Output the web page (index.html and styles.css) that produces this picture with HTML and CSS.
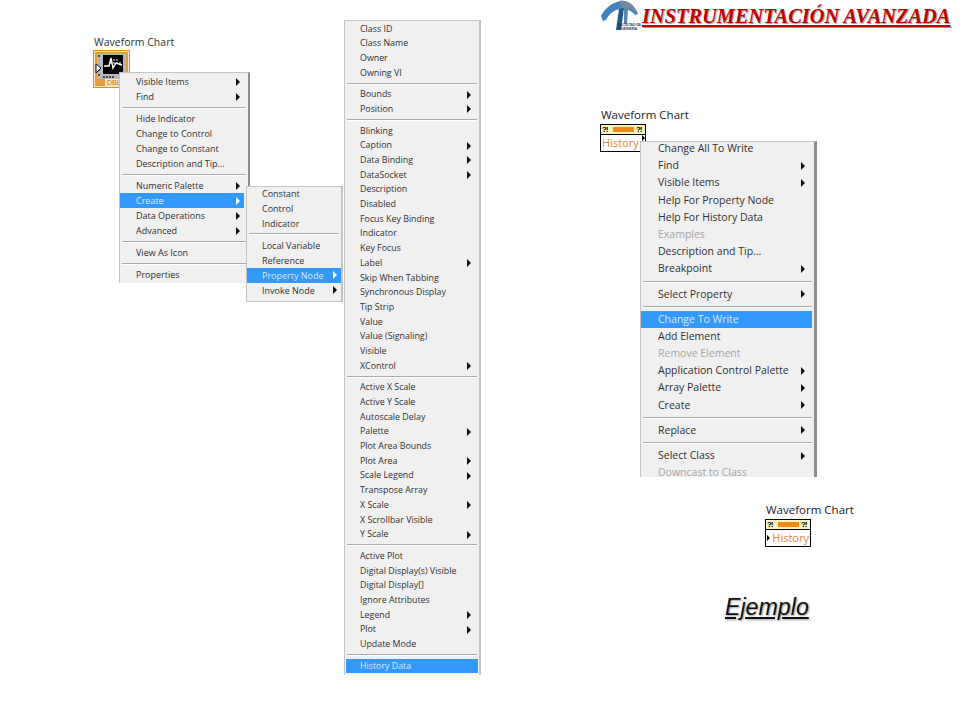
FILE: index.html
```html
<!DOCTYPE html>
<html lang="es">
<head>
    <meta charset="UTF-8">
    <title>Instrumentación Avanzada - Waveform Chart</title>
    <link rel="stylesheet" href="styles.css">
</head>
<body>
<div class="slide">
    <div class="head">
        <div class="logo">
            <svg width="42" height="33" viewBox="0 0 42 33">
                <path d="M1 16 C5 8 12 3 20 1 C28 0 34 5 38 14 L35 15 C31 10 27 9 23 9 C16 9 10 12 6 20 L3 21 Z" fill="#3f82bd"/>
                <path d="M20 1 C28 0 34 5 38 14 C32 9 27 8 21 8 Z" fill="#7388a0"/>
                <path d="M19 9 L24 8 L21 30 L16 30 Z" fill="#1f568c"/>
                <path d="M24 8 L28 9 L27 24 L24 24 Z" fill="#5c87ad"/>
            </svg>
            <span class="logo-txt">FACULTAD DE<br>INGENIERIA</span>
        </div>
        <h1 class="title">INSTRUMENTACIÓN AVANZADA</h1>
    </div>

    <!-- bloque izquierdo -->
    <div class="lbl lbl-a">Waveform Chart</div>
    <div class="chart-icon">
        <svg width="37" height="38" viewBox="0 0 37 38">
            <rect x="0.5" y="0.5" width="36" height="37" fill="#fbe3c4" stroke="#e58a1f"/>
            <rect x="2" y="2" width="33" height="34" fill="#e89a3c"/>
            <rect x="4" y="4" width="29" height="25" fill="#b4b8bf"/>
            <rect x="10" y="5" width="20" height="19" fill="#000"/>
            <path d="M11 16 H16 L18 8 L20 18 L23 13 L29 15" fill="none" stroke="#fff" stroke-width="1.4"/>
            <path d="M17 13 H28 M20 10 H26" stroke="#fff" stroke-width="1" stroke-dasharray="2 1"/>
            <path d="M5 6 H8 M5 20 H8 M5 25 H8 M10 27 H22" stroke="#222" stroke-width="1.4" stroke-dasharray="2 1"/>
            <path d="M3 14 L8 18 L3 23 Z" fill="#fff" stroke="#111"/>
        </svg>
        <span class="dbl">DBL</span>
    </div>

    <div class="menu sm m1">
        <div class="it arr">Visible Items</div>
        <div class="it arr">Find</div>
        <hr>
        <div class="it">Hide Indicator</div>
        <div class="it">Change to Control</div>
        <div class="it">Change to Constant</div>
        <div class="it">Description and Tip...</div>
        <hr>
        <div class="it arr">Numeric Palette</div>
        <div class="it arr sel">Create</div>
        <div class="it arr">Data Operations</div>
        <div class="it arr">Advanced</div>
        <hr>
        <div class="it">View As Icon</div>
        <hr>
        <div class="it">Properties</div>
    </div>

    <div class="menu sm m2">
        <div class="it">Constant</div>
        <div class="it">Control</div>
        <div class="it">Indicator</div>
        <hr>
        <div class="it">Local Variable</div>
        <div class="it">Reference</div>
        <div class="it arr sel">Property Node</div>
        <div class="it arr">Invoke Node</div>
    </div>

    <div class="menu sm m3">
        <div class="it">Class ID</div>
        <div class="it">Class Name</div>
        <div class="it">Owner</div>
        <div class="it">Owning VI</div>
        <hr>
        <div class="it arr">Bounds</div>
        <div class="it arr">Position</div>
        <hr>
        <div class="it">Blinking</div>
        <div class="it arr">Caption</div>
        <div class="it arr">Data Binding</div>
        <div class="it arr">DataSocket</div>
        <div class="it">Description</div>
        <div class="it">Disabled</div>
        <div class="it">Focus Key Binding</div>
        <div class="it">Indicator</div>
        <div class="it">Key Focus</div>
        <div class="it arr">Label</div>
        <div class="it">Skip When Tabbing</div>
        <div class="it">Synchronous Display</div>
        <div class="it">Tip Strip</div>
        <div class="it">Value</div>
        <div class="it">Value (Signaling)</div>
        <div class="it">Visible</div>
        <div class="it arr">XControl</div>
        <hr>
        <div class="it">Active X Scale</div>
        <div class="it">Active Y Scale</div>
        <div class="it">Autoscale Delay</div>
        <div class="it arr">Palette</div>
        <div class="it">Plot Area Bounds</div>
        <div class="it arr">Plot Area</div>
        <div class="it arr">Scale Legend</div>
        <div class="it">Transpose Array</div>
        <div class="it arr">X Scale</div>
        <div class="it">X Scrollbar Visible</div>
        <div class="it arr">Y Scale</div>
        <hr>
        <div class="it">Active Plot</div>
        <div class="it">Digital Display(s) Visible</div>
        <div class="it">Digital Display[]</div>
        <div class="it">Ignore Attributes</div>
        <div class="it arr">Legend</div>
        <div class="it arr">Plot</div>
        <div class="it">Update Mode</div>
        <hr>
        <div class="it sel">History Data</div>
    </div>

    <!-- bloque derecho -->
    <div class="lbl lbl-b">Waveform Chart</div>
    <div class="node node-b">
        <div class="node-top"><span class="ex">?!</span><span class="bar"></span><span class="ex">?!</span></div>
        <div class="node-name">History<i class="tick tick-r"></i></div>
    </div>

    <div class="menu lg m4">
        <div class="it">Change All To Write</div>
        <div class="it arr">Find</div>
        <div class="it arr">Visible Items</div>
        <div class="it">Help For Property Node</div>
        <div class="it">Help For History Data</div>
        <div class="it off">Examples</div>
        <div class="it">Description and Tip...</div>
        <div class="it arr">Breakpoint</div>
        <hr>
        <div class="it arr">Select Property</div>
        <hr>
        <div class="it sel">Change To Write</div>
        <div class="it">Add Element</div>
        <div class="it off">Remove Element</div>
        <div class="it arr">Application Control Palette</div>
        <div class="it arr">Array Palette</div>
        <div class="it arr">Create</div>
        <hr>
        <div class="it arr">Replace</div>
        <hr>
        <div class="it arr">Select Class</div>
        <div class="it off">Downcast to Class</div>
    </div>

    <div class="lbl lbl-c">Waveform Chart</div>
    <div class="node node-c">
        <div class="node-top"><span class="ex">?!</span><span class="bar"></span><span class="ex">?!</span></div>
        <div class="node-name"><i class="tick tick-l"></i>History</div>
    </div>

    <div class="ejemplo">Ejemplo</div>
</div>
</body>
</html>
```

FILE: styles.css
```css
html, body { margin: 0; padding: 0; background: #fff; }
.slide {
    position: relative;
    width: 960px;
    height: 720px;
    overflow: hidden;
    font-family: "Open Sans", "Noto Sans", sans-serif;
    color: #333;
}

/* cabecera */
.head {
    position: absolute;
    top: 0;
    left: 600px;
    display: flex;
    width: 352px;
}
.logo {
    position: relative;
    width: 42px;
    height: 34px;
    flex: none;
}
.logo svg { display: block; }
.logo-txt {
    position: absolute;
    left: 18px;
    top: 24px;
    font: bold 3.3px/3.6px "Liberation Sans", sans-serif;
    color: #2b3a4a;
    white-space: nowrap;
}
.title {
    margin: 5px 0 0;
    font: italic bold 20.4px/23px "Liberation Serif", serif;
    color: #c00000;
    text-decoration: underline;
    text-shadow: 1px 1px 1px #999;
    white-space: nowrap;
}

/* etiquetas y terminales */
.lbl {
    position: absolute;
    font-size: 10.5px;
    line-height: 14px;
    color: #333;
    white-space: nowrap;
}
.lbl-a { left: 94px; top: 35px; }
.lbl-b { left: 601px; top: 108px; font-size: 11.5px; color: #222; }
.lbl-c { left: 766px; top: 503px; font-size: 11.5px; color: #222; }

.chart-icon {
    position: absolute;
    left: 93px;
    top: 50px;
    width: 37px;
    height: 38px;
}
.chart-icon svg { display: block; }
.dbl {
    position: absolute;
    left: 12px;
    bottom: 1px;
    padding: 0 2px;
    font: 7px/8px "Liberation Sans", sans-serif;
    color: #c8690c;
    background: #fbe6c8;
}

.node {
    position: absolute;
    box-sizing: border-box;
    width: 46px;
    border: 1px solid #000;
    background: #fff;
}
.node-b { left: 600px; top: 124px; }
.node-c { left: 765px; top: 519px; }
.node-top {
    display: flex;
    align-items: center;
    justify-content: space-between;
    height: 9px;
    padding: 0 1px;
    background: #fdf3c0;
    border-bottom: 1px solid #000;
}
.ex {
    font: bold 8px/8px "Liberation Mono", monospace;
    color: #000;
    letter-spacing: -2px;
    width: 8px;
}
.bar {
    width: 21px;
    height: 5px;
    background: #f08a12;
}
.node-name {
    position: relative;
    height: 16px;
    font-size: 11px;
    line-height: 16px;
    color: #e8833a;
    text-align: right;
    padding-right: 1px;
}
.node-b .node-name { text-align: left; padding: 0 0 0 1px; }
.tick {
    position: absolute;
    top: 5px;
    border-top: 3px solid transparent;
    border-bottom: 3px solid transparent;
}
.tick-l { left: 1px; border-left: 3px solid #000; }
.tick-r { right: 0; top: 0; border-left: 3px solid #000; }

/* menus */
.menu {
    position: absolute;
    box-sizing: border-box;
    overflow: hidden;
    background: #f0f0f0;
    border: 1px solid #c4c4c4;
    border-right: 2px solid #8e8e8e;
    white-space: nowrap;
}
.menu hr {
    margin: 2.5px 2px;
    height: 1px;
    border: 0;
    border-top: 1px solid #a9a9a9;
    background: #fff;
}
.it {
    position: relative;
    color: #303030;
}
.it.arr::after {
    content: "";
    position: absolute;
    top: 50%;
    margin-top: -4px;
    border-top: 4px solid transparent;
    border-bottom: 4px solid transparent;
    border-left: 4px solid #111;
}
.it.sel { background: #3399ff; color: #d7e8fa; }
.it.sel.arr::after { border-left-color: #fff; }
.it.off { color: #a6a6a6; }

.sm { font-size: 9px; }
.sm .it { height: 15px; line-height: 15px; padding-left: 16px; }
.sm .it.arr::after { right: 8px; }

.m1 { left: 119px; top: 72px; width: 131px; height: 211px; padding-top: 1px; border-bottom: 0; }
.m1 .it.sel { margin-right: 4px; }
.m1 .it.sel.arr::after { right: 4px; }
.m2 { left: 246px; top: 186px; width: 97px; height: 116px; border-right-color: #c4c4c4; }
.m2 hr { margin: 2.25px 2px; }
.m2 .it { padding-left: 15px; }
.m2 .it:first-child { margin-top: -1px; }
.m2 .it.arr::after { right: 4px; }
.m3 { left: 344px; top: 20px; width: 137px; height: 655px; padding-top: 0.5px; border-bottom: 0; border-right-color: #c4c4c4; font-size: 8.85px; }
.m3 .it { height: 14.7px; line-height: 14.7px; padding-left: 15px; }
.m3 .it.sel { margin: 0 1px; padding-left: 14px; }

.lg { font-size: 10.5px; }
.lg .it { height: 17.2px; line-height: 17.2px; padding-left: 17px; margin-right: 2px; }
.lg .it:first-child { margin-top: -2px; }
.lg .it.arr::after { right: 7px; }
.lg hr { margin: 3px 2px; }
.m4 { left: 640px; top: 141px; width: 177px; height: 336px; border-bottom: 0; border-right: 3px solid #8e8e8e; }

.ejemplo {
    position: absolute;
    left: 725px;
    top: 592px;
    font: italic 23.2px/30px "Liberation Sans", sans-serif;
    color: #111;
    text-decoration: underline;
    text-shadow: 1px 1px 2px #999;
}
```
